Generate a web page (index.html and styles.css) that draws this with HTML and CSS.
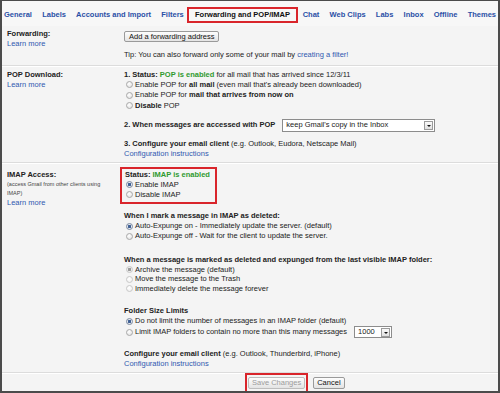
FILE: index.html
```html
<!DOCTYPE html>
<html>

<head>
    <meta name="viewport" content="width=device-width, initial-scale=1">
    <title>Settings - Forwarding and POP/IMAP</title>
    <link rel="stylesheet" href="styles.css">
</head>

<body>
    <div class="frame">
        <div class="tabs">
            <a href="#">General</a>
            <a href="#">Labels</a>
            <a href="#">Accounts and Import</a>
            <a href="#">Filters</a>
            <a class="active" href="#">Forwarding and POP/IMAP</a>
            <a href="#">Chat</a>
            <a href="#">Web Clips</a>
            <a href="#">Labs</a>
            <a href="#">Inbox</a>
            <a href="#">Offline</a>
            <a href="#">Themes</a>
        </div>

        <!-- forwarding -->
        <div class="section fwd">
            <div class="label">
                <b>Forwarding:</b>
                <a href="#">Learn more</a>
            </div>
            <div class="content">
                <button class="btn add-btn">Add a forwarding address</button>
                <p class="tip">Tip: You can also forward only some of your mail by <a href="#">creating a filter!</a></p>
            </div>
        </div>

        <!-- pop -->
        <div class="section pop">
            <div class="label">
                <b>POP Download:</b>
                <a href="#">Learn more</a>
            </div>
            <div class="content">
                <div class="line"><b>1. Status: <span class="green">POP is enabled</span></b> for all mail that has arrived since 12/3/11</div>
                <label class="opt"><input type="radio" name="pop">Enable POP for <b>all mail</b> (even mail that's already been downloaded)</label>
                <label class="opt"><input type="radio" name="pop">Enable POP for <b>mail that arrives from now on</b></label>
                <label class="opt"><input type="radio" name="pop"><b>Disable</b> POP</label>

                <div class="line with-select">
                    <b>2. When messages are accessed with POP</b>
                    <span class="select wide"><span class="value">keep Gmail's copy in the Inbox</span><span class="arrow"></span></span>
                </div>

                <div class="line gap">
                    <b>3. Configure your email client</b> (e.g. Outlook, Eudora, Netscape Mail)
                </div>
                <a class="line" href="#">Configuration instructions</a>
            </div>
        </div>

        <!-- imap -->
        <div class="section imap">
            <div class="label">
                <b>IMAP Access:</b>
                <span class="small">(access Gmail from other clients using IMAP)</span>
                <a href="#">Learn more</a>
            </div>
            <div class="content">
                <div class="highlight">
                    <div class="line"><b>Status: <span class="green">IMAP is enabled</span></b></div>
                    <label class="opt"><input type="radio" name="imap" checked>Enable IMAP</label>
                    <label class="opt"><input type="radio" name="imap">Disable IMAP</label>
                </div>

                <div class="group first">
                    <div class="line"><b>When I mark a message in IMAP as deleted:</b></div>
                    <label class="opt"><input type="radio" name="expunge" checked>Auto-Expunge on - Immediately update the server. (default)</label>
                    <label class="opt"><input type="radio" name="expunge">Auto-Expunge off - Wait for the client to update the server.</label>
                </div>

                <div class="group tight">
                    <div class="line"><b>When a message is marked as deleted and expunged from the last visible IMAP folder:</b></div>
                    <label class="opt"><input type="radio" name="expunged" checked disabled>Archive the message (default)</label>
                    <label class="opt"><input type="radio" name="expunged" disabled>Move the message to the Trash</label>
                    <label class="opt"><input type="radio" name="expunged" disabled>Immediately delete the message forever</label>
                </div>

                <div class="group">
                    <div class="line"><b>Folder Size Limits</b></div>
                    <label class="opt"><input type="radio" name="limit" checked>Do not limit the number of messages in an IMAP folder (default)</label>
                    <label class="opt limit-row"><input type="radio" name="limit">Limit IMAP folders to contain no more than this many messages
                        <span class="select small-select"><span class="value">1000</span><span class="arrow"></span></span>
                    </label>
                </div>

                <div class="group last">
                    <div class="line"><b>Configure your email client</b> (e.g. Outlook, Thunderbird, iPhone)</div>
                    <a class="line" href="#">Configuration instructions</a>
                </div>
            </div>
        </div>

        <div class="actions">
            <div class="save-box">
                <button class="btn" disabled>Save Changes</button>
            </div>
            <button class="btn cancel">Cancel</button>
        </div>
    </div>
</body>

</html>
```

FILE: styles.css
```css
body {
    margin: 0;
    padding: 0;
    font-family: "Liberation Sans", Arial, Helvetica, sans-serif;
    background-color: #f4f4f4;
}

.frame {
    width: 500px;
    height: 393px;
    box-sizing: border-box;
    border: 2px solid #4b4b4b;
    border-top-width: 1px;
    background-color: #f4f4f4;
    color: #222;
    font-size: 7.5px;
    line-height: 10px;
    overflow: hidden;
    display: flex;
    flex-direction: column;
}

a {
    color: #3058b0;
    text-decoration: none;
}

b {
    color: #222;
}

.green,
b .green {
    color: #2f9a2f;
}

/* tabs */

.tabs {
    display: flex;
    align-items: center;
    gap: 10.2px;
    padding: 6px 0 3px 2px;
    background-color: #f7f7f7;
    font-size: 7.5px;
    font-weight: bold;
    line-height: 12px;
}

.tabs a {
    color: #2a4fa6;
    white-space: nowrap;
}

.tabs a.active {
    color: #111;
    border: 2px solid #d9252b;
    padding: 0 5.5px;
    margin: 0 -5px 0 -6.5px;
}

/* sections */

.section {
    display: flex;
    border-bottom: 1px solid #dcdcdc;
    box-shadow: 0 1px 0 #fff;
}

.label {
    flex: 0 0 121px;
    box-sizing: border-box;
    padding-left: 5px;
    display: flex;
    flex-direction: column;
}

.content {
    flex: 1;
    padding-left: 1px;
}

.content .line {
    display: block;
    white-space: nowrap;
}

.fwd {
    padding: 3px 0 5px;
}

.pop {
    padding: 4px 0 2.5px;
}

.imap {
    padding: 4px 0 3px;
}

.imap .label {
    padding-top: 3px;
}

.small {
    font-size: 5.5px;
    line-height: 9px;
    color: #444;
    padding-right: 14px;
}

.tip {
    margin: 8.3px 0 0;
}

/* buttons */

.btn {
    font-family: "Liberation Sans", Arial, Helvetica, sans-serif;
    font-size: 7.5px;
    line-height: 10px;
    height: 12px;
    padding: 0 3px;
    color: #111;
    background: linear-gradient(#fdfdfd, #e4e4e4);
    border: 1px solid #9a9a9a;
    border-radius: 2px;
    display: block;
}

.btn:disabled {
    color: #9c9c9c;
    border-color: #bdbdbd;
}

.add-btn {
    margin-top: 1.7px;
    height: 11px;
    line-height: 9px;
    padding: 0 4px;
}

/* radios */

.opt {
    display: block;
    white-space: nowrap;
    line-height: 10px;
}

.pop .opt {
    line-height: 10.5px;
}

.opt input {
    -webkit-appearance: none;
    appearance: none;
    display: inline-block;
    vertical-align: middle;
    width: 7px;
    height: 7px;
    margin: -1px 2px 0 2px;
    border: 1px solid #a9a9a9;
    border-radius: 50%;
    background: radial-gradient(circle at 40% 35%, #fff, #dcdcdc);
    box-sizing: border-box;
}

.opt input:checked {
    border-color: #7c8aa0;
    background: radial-gradient(circle, #3e5f94 0, #3e5f94 1.4px, #e8ecf2 1.6px, #d5d9df 100%);
}

.opt input:disabled {
    border-color: #c8c8c8;
    background: radial-gradient(circle at 40% 35%, #fff, #ececec);
}

.opt input:checked:disabled {
    background: radial-gradient(circle, #9a9a9a 0, #9a9a9a 1.4px, #f0f0f0 1.6px, #e2e2e2 100%);
}

.tight .opt {
    line-height: 9.5px;
}

/* selects */

.content .with-select {
    display: flex;
    align-items: center;
    gap: 7px;
}

.pop .with-select {
    margin-top: 7.5px;
    height: 13px;
}

.pop .gap {
    margin-top: 7.5px;
}

.select {
    display: inline-flex;
    align-items: center;
    justify-content: space-between;
    box-sizing: border-box;
    background-color: #fff;
    border: 1px solid #8c8c8c;
    padding: 0 1px 0 3px;
    font-weight: normal;
    color: #222;
}

.select.wide {
    width: 153px;
    height: 13px;
}

.select.small-select {
    width: 38px;
    height: 12px;
    margin-left: 7px;
}

.arrow {
    width: 9px;
    height: 9px;
    box-sizing: border-box;
    border: 1px solid #9b9b9b;
    background: linear-gradient(#fafafa, #e0e0e0);
    position: relative;
}

.arrow::after {
    content: "";
    position: absolute;
    left: 2px;
    top: 3px;
    border-left: 2px solid transparent;
    border-right: 2px solid transparent;
    border-top: 2px solid #111;
}

.opt.limit-row {
    display: flex;
    align-items: center;
    height: 12px;
}

.opt.limit-row input {
    margin-top: 0;
}

/* imap groups */

.highlight {
    display: inline-block;
    border: 2px solid #d9252b;
    padding: 1px 5px 2px 3px;
    margin-left: -4px;
}

.highlight .opt input {
    margin-left: 1px;
}

.group {
    margin-top: 13px;
}

.group.first {
    margin-top: 7.5px;
}

.group.tight {
    margin-top: 13.5px;
}

.group.last {
    margin-top: 11px;
}

/* footer */

.actions {
    flex: 1;
    display: flex;
    align-items: flex-start;
    padding-left: 243px;
}

.save-box {
    border: 2px solid #d9252b;
    padding: 2px 1px 4px;
}

.cancel {
    margin: 4px 0 0 5px;
}
```
